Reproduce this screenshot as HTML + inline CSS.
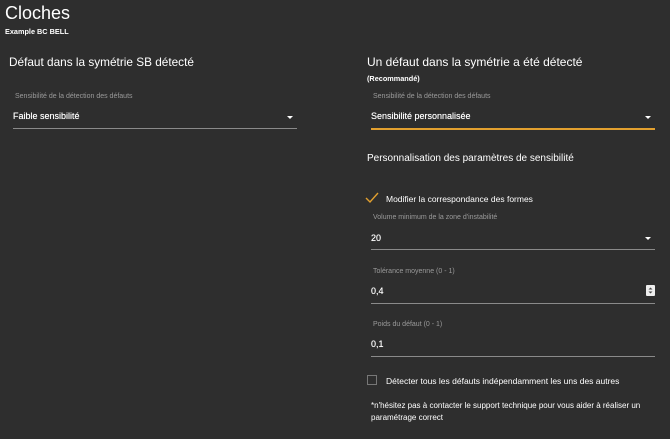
<!DOCTYPE html>
<html><head><meta charset="utf-8"><style>
*{margin:0;padding:0;box-sizing:border-box}
body{width:670px;height:439px;background:#2e2e2e;color:#fff;font-family:"Liberation Sans",sans-serif;position:relative;overflow:hidden}
.a{position:absolute;white-space:nowrap}
.lbl{font-size:7px;color:#9a9a9a}
.val{font-size:9px;color:#fff;text-shadow:0 0 0.4px #fff}
.line{position:absolute;height:1px;background:#8a8a8a}
.tri{position:absolute;width:0;height:0;border-left:3px solid transparent;border-right:3px solid transparent;border-top:3px solid #fff}
.b{font-size:8.5px}
</style></head><body>
<div class="a" style="left:5px;top:3px;font-size:18px">Cloches</div>
<div class="a" style="left:5px;top:27px;font-size:7.3px;font-weight:bold">Example BC BELL</div>

<div class="a" style="left:9px;top:55px;font-size:11.8px">Défaut dans la symétrie SB détecté</div>
<div class="a lbl" style="left:15px;top:93px">Sensibilité de la détection des défauts</div>
<div class="a val" style="left:13px;top:111px">Faible sensibilité</div>
<div class="tri" style="left:287px;top:116px"></div>
<div class="line" style="left:13px;top:128px;width:284px"></div>

<div class="a" style="left:367px;top:55px;font-size:12px">Un défaut dans la symétrie a été détecté</div>
<div class="a" style="left:367px;top:74px;font-size:7.3px;font-weight:bold">(Recommandé)</div>
<div class="a lbl" style="left:373px;top:93px">Sensibilité de la détection des défauts</div>
<div class="a val" style="left:371px;top:111px">Sensibilité personnalisée</div>
<div class="tri" style="left:645px;top:116px"></div>
<div class="line" style="left:371px;top:128px;width:284px;height:2px;background:#e2a02f"></div>

<div class="a" style="left:367px;top:153px;font-size:10px">Personnalisation des paramètres de sensibilité</div>

<svg class="a" style="left:365px;top:192px" width="14" height="12"><path d="M1 6 L5 10 L13 1" stroke="#e2a02f" stroke-width="1.4" fill="none"/></svg>
<div class="a b" style="left:386px;top:194px">Modifier la correspondance des formes</div>

<div class="a lbl" style="left:373px;top:214px">Volume minimum de la zone d'instabilité</div>
<div class="a val" style="left:371px;top:233px">20</div>
<div class="tri" style="left:645px;top:237px"></div>
<div class="line" style="left:371px;top:249px;width:284px"></div>

<div class="a lbl" style="left:373px;top:268px">Tolérance moyenne (0 - 1)</div>
<div class="a val" style="left:371px;top:286px">0,4</div>
<svg class="a" style="left:646px;top:285px" width="9" height="11"><rect width="9" height="11" rx="1" fill="#eee"/><path d="M2.5 4.5 L4.5 2.5 L6.5 4.5Z M2.5 6.5 L4.5 8.5 L6.5 6.5Z" fill="#444"/></svg>
<div class="line" style="left:371px;top:303px;width:284px"></div>

<div class="a lbl" style="left:373px;top:321px">Poids du défaut (0 - 1)</div>
<div class="a val" style="left:371px;top:339px">0,1</div>
<div class="line" style="left:371px;top:356px;width:284px"></div>

<div class="a" style="left:367px;top:375px;width:10px;height:10px;border:1px solid #777"></div>
<div class="a b" style="left:386px;top:376px">Détecter tous les défauts indépendamment les uns des autres</div>

<div class="a" style="left:371px;top:400px;font-size:8px;line-height:12px">*n'hésitez pas à contacter le support technique pour vous aider à réaliser un<br>paramétrage correct</div>
</body></html>
